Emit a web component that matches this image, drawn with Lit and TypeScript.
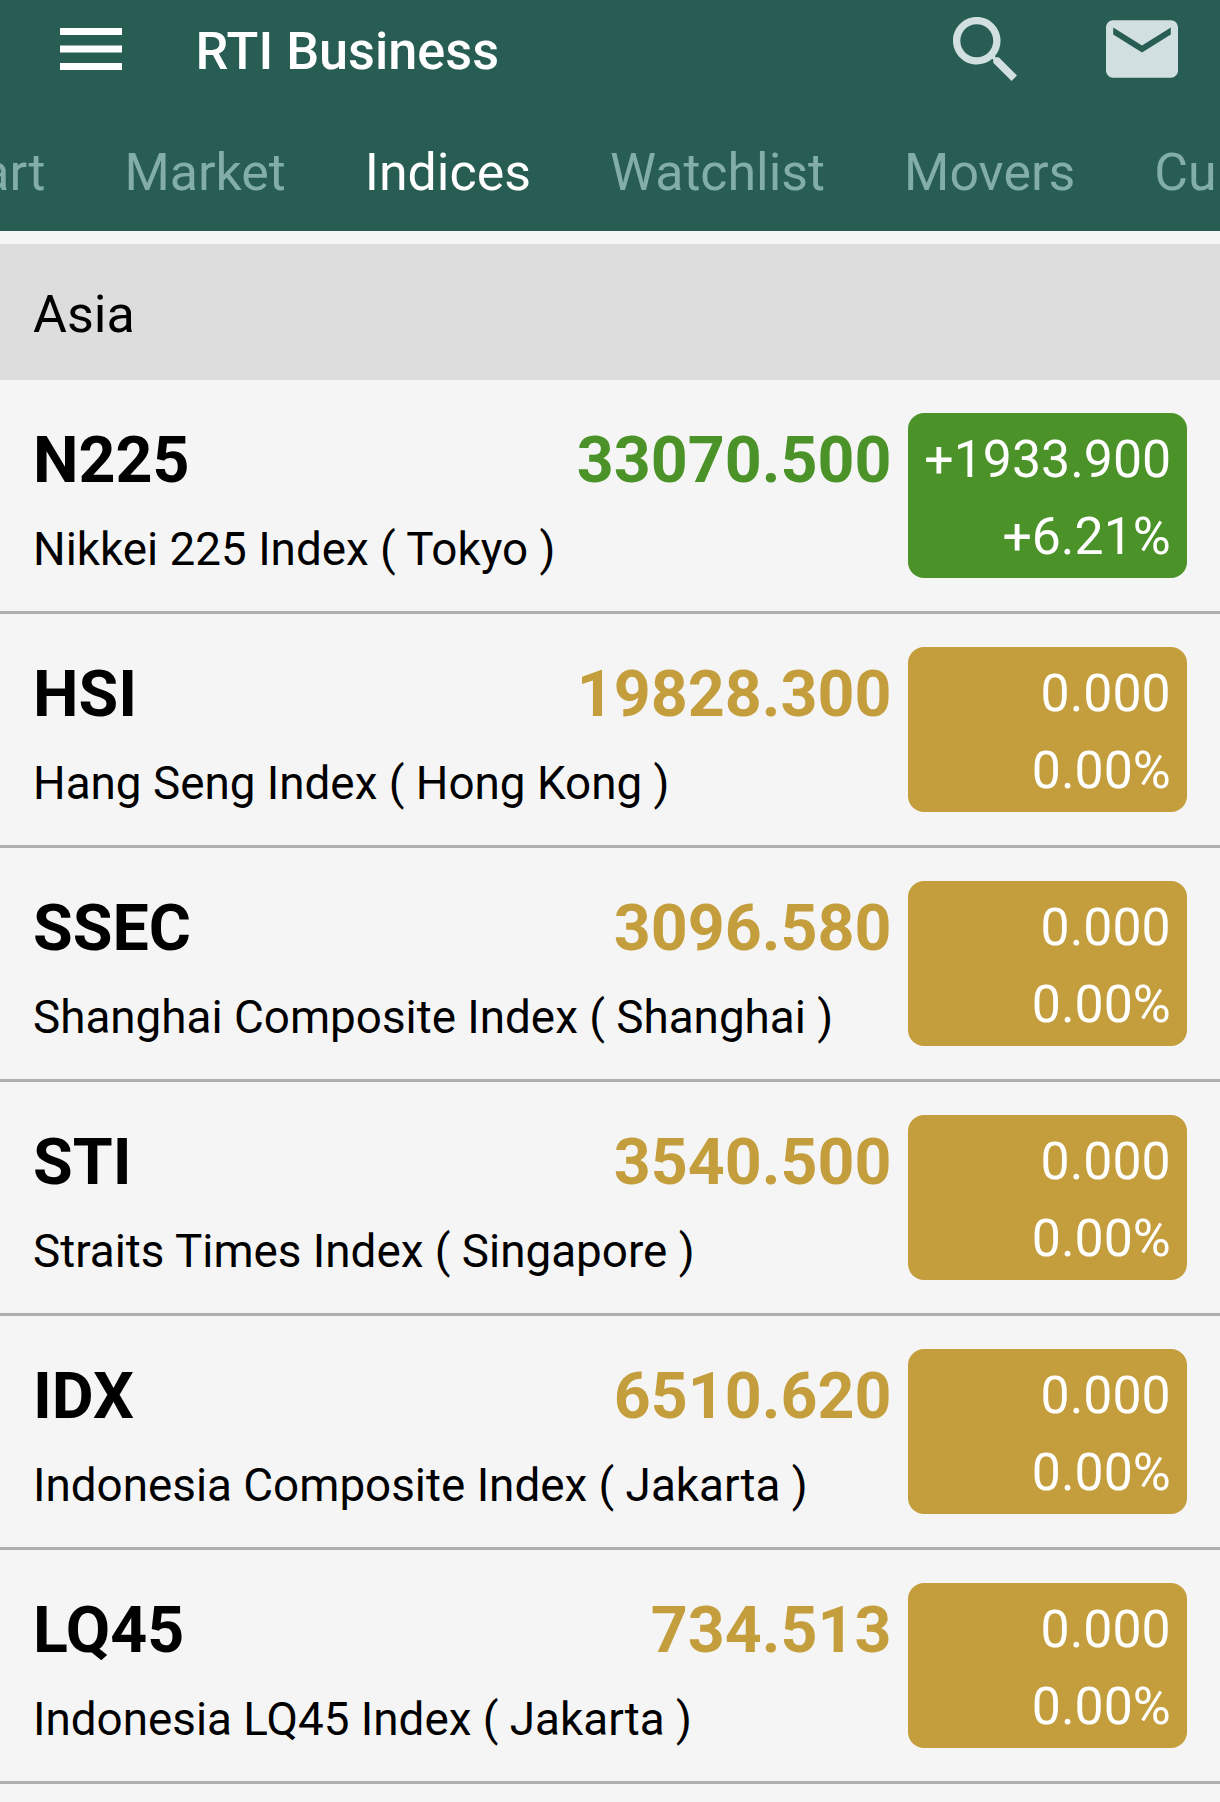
import { LitElement, html, css } from "lit";
import { customElement } from "lit/decorators.js";
import { classMap } from "lit/directives/class-map.js";

interface Quote {
  code: string;
  name: string;
  price: string;
  change: string;
  percent: string;
  up?: boolean;
}

const tabs = ["Chart", "Market", "Indices", "Watchlist", "Movers", "Currencies"];
const active = "Indices";

const quotes: Quote[] = [
  { code: "N225", name: "Nikkei 225 Index ( Tokyo )", price: "33070.500", change: "+1933.900", percent: "+6.21%", up: true },
  { code: "HSI", name: "Hang Seng Index ( Hong Kong )", price: "19828.300", change: "0.000", percent: "0.00%" },
  { code: "SSEC", name: "Shanghai Composite Index ( Shanghai )", price: "3096.580", change: "0.000", percent: "0.00%" },
  { code: "STI", name: "Straits Times Index ( Singapore )", price: "3540.500", change: "0.000", percent: "0.00%" },
  { code: "IDX", name: "Indonesia Composite Index ( Jakarta )", price: "6510.620", change: "0.000", percent: "0.00%" },
  { code: "LQ45", name: "Indonesia LQ45 Index ( Jakarta )", price: "734.513", change: "0.000", percent: "0.00%" },
];

@customElement("app-root")
export class AppRoot extends LitElement {
  static styles = css`
    :host {
      display: block;
      width: 1220px;
      height: 1802px;
      overflow: hidden;
      background: #f5f5f5;
      color: #000;
      font-family: Roboto, "Liberation Sans", sans-serif;
      font-size: 52px;
      white-space: nowrap;
    }
    .header {
      height: 231px;
      background: #285d54;
      color: #fff;
      overflow: hidden;
    }
    .bar {
      display: flex;
      align-items: center;
      height: 98px;
      padding: 0 42px 0 60px;
    }
    svg {
      display: block;
      flex: none;
    }
    .menu {
      width: 62px;
      height: 42px;
      fill: #fff;
    }
    .title {
      margin: 6px auto 0 73.5px;
      font-size: 52.2px;
      line-height: 60px;
      font-weight: 500;
    }
    .search {
      width: 64px;
      height: 64px;
      margin-right: 89px;
      fill: #d1dfe0;
    }
    .mail {
      width: 72px;
      height: 58px;
      fill: #d1dfe0;
    }
    .tabs {
      display: flex;
      gap: 79px;
      margin-left: -81px;
      padding-top: 45px;
      font-size: 51.9px;
      line-height: 60px;
      color: #83ada7;
    }
    .active {
      color: #fff;
    }
    .region {
      margin-top: 13px;
      height: 136px;
      box-sizing: border-box;
      padding: 41px 33px 0;
      line-height: 60px;
      background: #ddd;
    }
    .row {
      display: flex;
      box-sizing: border-box;
      height: 234px;
      padding: 33px 33px 0;
      border-bottom: 3px solid #aeaeae;
    }
    .info {
      flex: 1;
      min-width: 0;
    }
    .line {
      display: flex;
      justify-content: space-between;
      margin: 9px 16.5px 0 0;
      font-size: 64.5px;
      line-height: 76px;
      font-weight: 700;
    }
    .price {
      color: #c49e3d;
    }
    .up .price {
      color: #4b9328;
    }
    .name {
      margin-top: 25px;
      font-size: 45.8px;
      line-height: 54px;
    }
    .badge {
      box-sizing: border-box;
      width: 279px;
      height: 165px;
      padding: 8px 16.3px 0;
      border-radius: 16px;
      background: #c49e3d;
      color: #fff;
      font-size: 51.8px;
      text-align: right;
      line-height: 77px;
    }
    .up .badge {
      background: #4b9328;
    }
  `;

  render() {
    return html`
      <div class="header">
        <div class="bar">
          <svg class="menu" viewBox="3 6 18 12" preserveAspectRatio="none">
            <path d="M3 18h18v-2H3v2zm0-5h18v-2H3v2zm0-7v2h18V6H3z" />
          </svg>
          <div class="title">RTI Business</div>
          <svg class="search" viewBox="3 3 17.49 17.49">
            <path d="M15.5 14h-.79l-.28-.27C15.41 12.59 16 11.11 16 9.5 16 5.91 13.09 3 9.5 3S3 5.91 3 9.5 5.91 16 9.5 16c1.61 0 3.09-.59 4.23-1.57l.27.28v.79l5 4.99L20.49 19l-4.99-5zm-6 0C7.01 14 5 11.99 5 9.5S7.01 5 9.5 5 14 7.01 14 9.5 11.99 14 9.5 14z" />
          </svg>
          <svg class="mail" viewBox="2 4 20 16">
            <path d="M20 4H4c-1.1 0-1.99.9-1.99 2L2 18c0 1.1.9 2 2 2h16c1.1 0 2-.9 2-2V6c0-1.1-.9-2-2-2zm0 4l-8 5-8-5V6l8 5 8-5v2z" />
          </svg>
        </div>
        <div class="tabs">
          ${tabs.map((t) => html`<div class=${classMap({ active: t === active })}>${t}</div>`)}
        </div>
      </div>
      <div class="region">Asia</div>
      ${quotes.map(
        (q) => html`
          <div class=${classMap({ row: true, up: !!q.up })}>
            <div class="info">
              <div class="line"><span>${q.code}</span><span class="price">${q.price}</span></div>
              <div class="name">${q.name}</div>
            </div>
            <div class="badge">
              <div>${q.change}</div>
              <div>${q.percent}</div>
            </div>
          </div>
        `
      )}
    `;
  }
}
